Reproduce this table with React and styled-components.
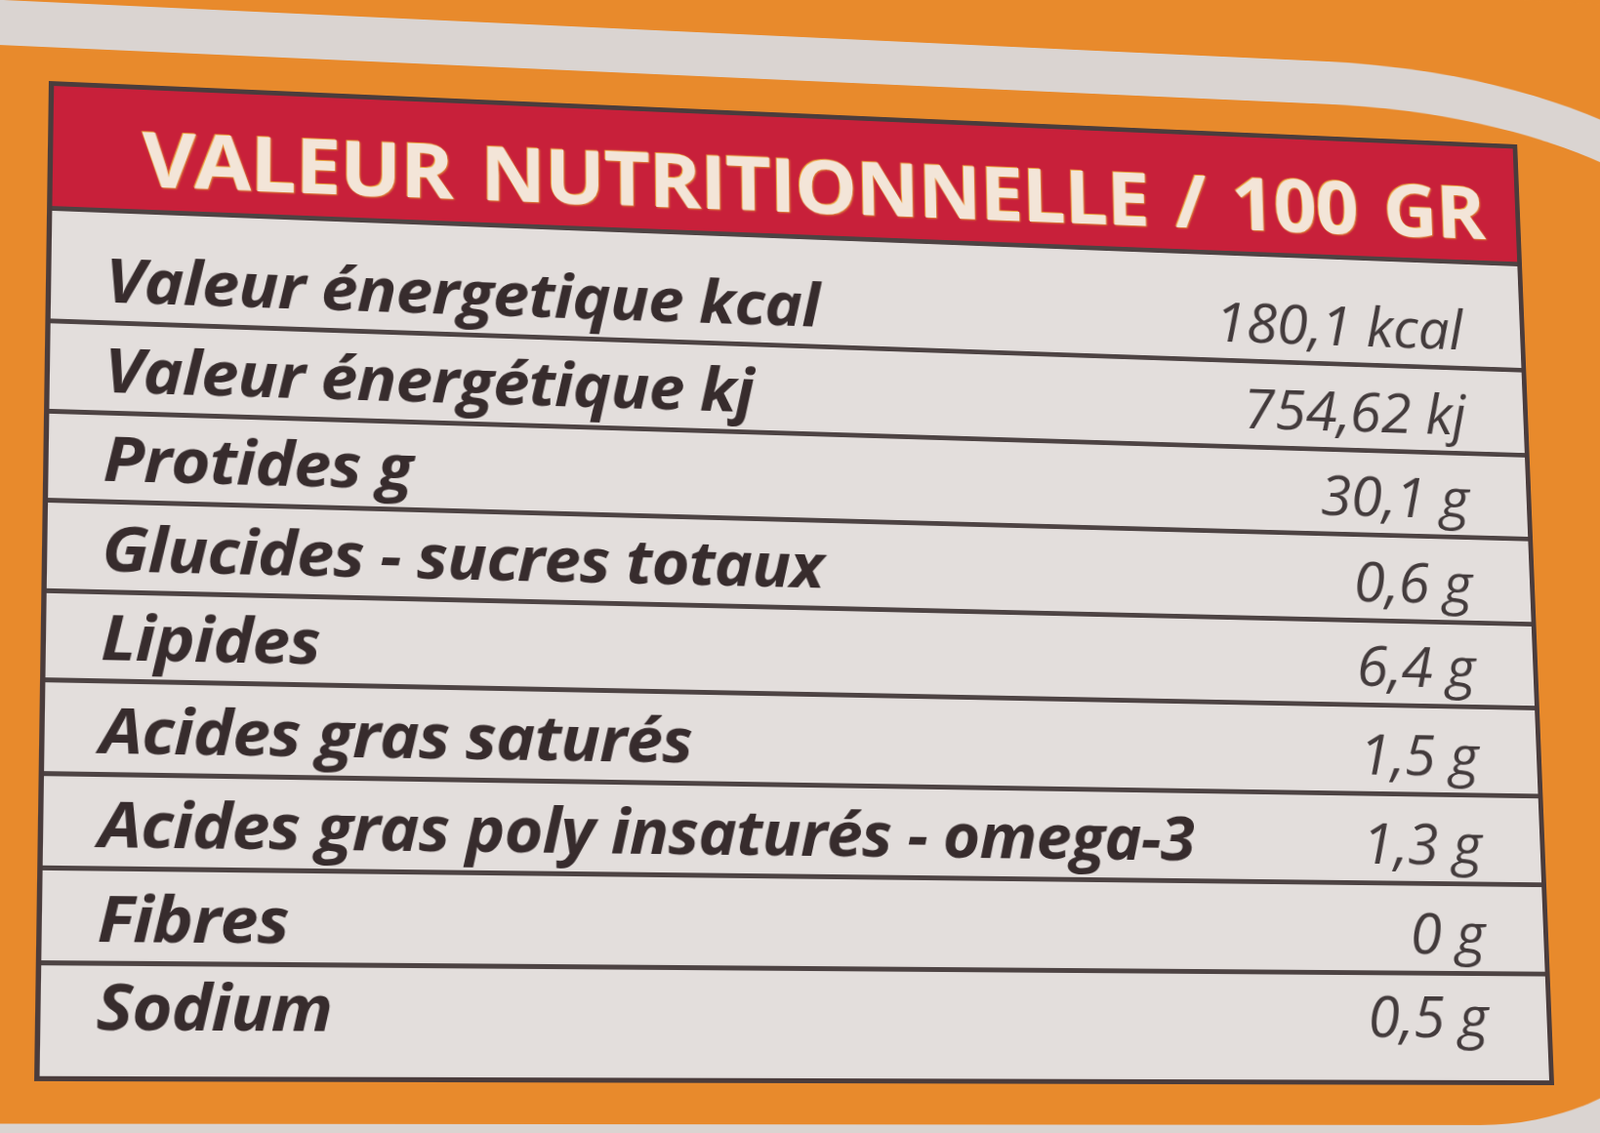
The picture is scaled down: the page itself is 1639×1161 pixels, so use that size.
import React, { useMemo } from "react";
import styled, { createGlobalStyle } from "styled-components";

// label photographed at an angle: the card is laid out flat, then mapped
// onto the four corners measured on the photo
const CARD_W = 1504;
const CARD_H = 1025;
const CORNERS = [
  [50, 83],
  [1554, 148],
  [1592, 1112],
  [35, 1108],
];
// where the card sits inside the scene (scene padding + band + panel padding)
const CARD_LEFT = 0 + 48 + 200;
const CARD_TOP = 80 + 48 + 36;

const ORANGE = "#e88a2c";

const GlobalStyle = createGlobalStyle`
  html, body {
    margin: 0;
    padding: 0;
    overflow: hidden;
    background: ${ORANGE};
  }
`;

const Root = styled.div`
  width: 1639px;
  height: 1161px;
  overflow: hidden;
  background: ${ORANGE};
`;

const Scene = styled.div`
  width: max-content;
  padding: 80px 80px 80px 0;
  background: ${ORANGE};
  transform-origin: 0 0;
  filter: blur(0.6px);
`;

const Band = styled.div`
  padding: 48px;
  background: #dad4d1;
  border-top-right-radius: 473px 235px;
  border-bottom-right-radius: 348px 348px;
`;

const Panel = styled.div`
  padding: 36px 221px 42px 200px;
  background: ${ORANGE};
  border-top-right-radius: 425px 187px;
  border-bottom-right-radius: 300px 300px;
`;

const Card = styled.div`
  box-sizing: border-box;
  width: ${CARD_W}px;
  height: ${CARD_H}px;
  display: flex;
  flex-direction: column;
  border: 5px solid #4a3c3c;
  background: #e3dedc;
`;

const Header = styled.div`
  box-sizing: border-box;
  height: 127px;
  flex: none;
  display: flex;
  align-items: flex-end;
  padding: 0 0 15px 86px;
  background: #c8203a;
  font-family: "Open Sans", "Noto Sans", sans-serif;
  font-weight: 700;
  font-size: 80px;
  line-height: 80px;
  letter-spacing: -1px;
  word-spacing: 8px;
  color: #f3e5d8;
  text-shadow: -1px -1px 1px #efb443, 1px 1px 2px #e0903a;
  white-space: nowrap;
`;

const Row = styled.div`
  box-sizing: border-box;
  ${(p) => (p.$h ? `height: ${p.$h}px; flex: none;` : "flex: 1;")}
  display: flex;
  align-items: flex-end;
  justify-content: space-between;
  padding: 0 62px ${(p) => p.$pb}px 52px;
  border-top: 5px solid #4d4343;
`;

const Label = styled.span`
  font-family: "Open Sans", "Noto Sans", sans-serif;
  font-weight: 700;
  font-style: italic;
  font-size: 65px;
  line-height: 62px;
  letter-spacing: -1px;
  color: #372c2d;
  white-space: nowrap;
`;

const Value = styled.span`
  margin-bottom: -3px;
  font-family: "Open Sans", "Noto Sans", sans-serif;
  font-weight: 500;
  font-style: italic;
  font-size: 60px;
  line-height: 62px;
  letter-spacing: -0.5px;
  color: #433b3c;
  white-space: nowrap;
`;

const rows = [
  { label: "Valeur énergetique kcal", value: "180,1 kcal", h: 118 },
  { label: "Valeur énergétique kj", value: "754,62 kj", h: 94 },
  { label: "Protides g", value: "30,1 g", h: 92 },
  { label: "Glucides - sucres totaux", value: "0,6 g", h: 93 },
  { label: "Lipides", value: "6,4 g", h: 91 },
  { label: "Acides gras saturés", value: "1,5 g", h: 95 },
  { label: "Acides gras poly insaturés - omega-3", value: "1,3 g", h: 95 },
  { label: "Fibres", value: "0 g", h: 95 },
  { label: "Sodium", value: "0,5 g", h: null },
];

// unit square -> quad (Heckbert)
function squareToQuad(q) {
  const [[x0, y0], [x1, y1], [x2, y2], [x3, y3]] = q;
  const dx1 = x1 - x2, dx2 = x3 - x2, dx3 = x0 - x1 + x2 - x3;
  const dy1 = y1 - y2, dy2 = y3 - y2, dy3 = y0 - y1 + y2 - y3;
  const den = dx1 * dy2 - dx2 * dy1;
  const g = (dx3 * dy2 - dx2 * dy3) / den;
  const h = (dx1 * dy3 - dx3 * dy1) / den;
  return {
    a: x1 - x0 + g * x1,
    b: x3 - x0 + h * x3,
    c: x0,
    d: y1 - y0 + g * y1,
    e: y3 - y0 + h * y3,
    f: y0,
    g,
    h,
  };
}

function sceneMatrix() {
  const m = squareToQuad(CORNERS);
  const W = CARD_W, H = CARD_H, pl = CARD_LEFT, pt = CARD_TOP;
  const A = m.a / W, B = m.b / H, C = m.c - (m.a * pl) / W - (m.b * pt) / H;
  const D = m.d / W, E = m.e / H, F = m.f - (m.d * pl) / W - (m.e * pt) / H;
  const G = m.g / W, Hh = m.h / H, I = 1 - (m.g * pl) / W - (m.h * pt) / H;
  const v = [A, D, 0, G, B, E, 0, Hh, 0, 0, 1, 0, C, F, 0, I].map((n) => n / I);
  return `matrix3d(${v.join(",")})`;
}

export default function App() {
  const transform = useMemo(sceneMatrix, []);
  return (
    <Root>
      <GlobalStyle />
      <Scene style={{ transform }}>
        <Band>
          <Panel>
            <Card>
              <Header>VALEUR NUTRITIONNELLE / 100 GR</Header>
              {rows.map((r, i) => (
                <Row key={i} $h={r.h} $pb={r.h ? 13 : 40}>
                  <Label>{r.label}</Label>
                  <Value>{r.value}</Value>
                </Row>
              ))}
            </Card>
          </Panel>
        </Band>
      </Scene>
    </Root>
  );
}
